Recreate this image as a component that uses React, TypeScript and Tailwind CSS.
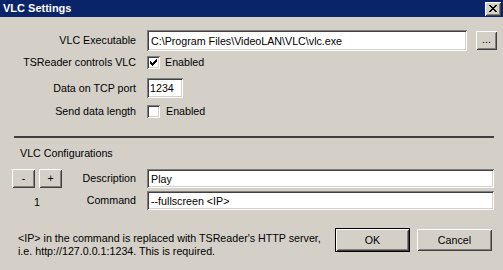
import React from 'react';

const sunken =
  'bg-white shadow-[inset_1px_1px_0_#808080,inset_-1px_-1px_0_#ffffff,inset_2px_2px_0_#404040,inset_-2px_-2px_0_#d4d0c8]';
const raised =
  'bg-[#d4d0c8] shadow-[inset_1px_1px_0_#ffffff,inset_-1px_-1px_0_#404040,inset_2px_2px_0_#d4d0c8,inset_-2px_-2px_0_#808080]';

function TextBox({ value, className }: { value: string; className: string }) {
  return (
    <div className={`${sunken} ${className} flex items-center pl-[4px] pt-[1px] overflow-hidden whitespace-nowrap`}>
      {value}
    </div>
  );
}

function CheckBox({ checked }: { checked: boolean }) {
  return (
    <div className={`${sunken} w-[13px] h-[13px] shrink-0 relative`}>
      {checked && (
        <svg width="7" height="7" viewBox="0 0 7 7" className="absolute left-[3px] top-[3px]" shapeRendering="crispEdges">
          <path d="M0 2h1v1h1v1h1v-1h1v-1h1v-1h1v-1h1v3h-1v1h-1v1h-1v1h-1v1h-1v-1h-1v-1h-1z" fill="#000" />
        </svg>
      )}
    </div>
  );
}

function Button({ label, className }: { label: string; className: string }) {
  return <div className={`${raised} ${className} flex items-center justify-center`}>{label}</div>;
}

export default function App() {
  return (
    <div className="w-[503px] h-[270px] bg-[#d4d0c8] text-black text-[10.7px] leading-[13px] font-['Liberation_Sans',Arial,sans-serif] overflow-hidden">
      {/* Title bar */}
      <div className="h-[17px] bg-[#0a246a] flex items-center pl-[3px] pr-[2px]">
        <span className="text-white font-bold text-[11px]">VLC Settings</span>
        <div className={`${raised} ml-auto w-[16px] h-[14px] flex items-center justify-center`}>
          <svg width="8" height="7" viewBox="0 0 8 7" shapeRendering="crispEdges">
            <path
              d="M0 0h2v1h1v1h2v-1h1v-1h2v1h-1v1h-1v1h-1v1h1v1h1v1h1v1h-2v-1h-1v-1h-2v1h-1v1h-2v-1h1v-1h1v-1h1v-1h-1v-1h-1v-1h-1z"
              fill="#000"
            />
          </svg>
        </div>
      </div>

      {/* VLC Executable */}
      <div className="mt-[13px] h-[21px] flex items-center">
        <div className="w-[136px] text-right">VLC Executable</div>
        <TextBox value="C:\Program Files\VideoLAN\VLC\vlc.exe" className="ml-[11px] w-[320px] h-[21px]" />
        <Button label="..." className="ml-[9px] w-[21px] h-[19px] pb-[3px]" />
      </div>

      {/* TSReader controls VLC */}
      <div className="mt-[1px] h-[21px] flex items-center">
        <div className="w-[136px] text-right">TSReader controls VLC</div>
        <div className="ml-[11px] flex items-center gap-[5px]">
          <CheckBox checked />
          <span>Enabled</span>
        </div>
      </div>

      {/* Data on TCP port */}
      <div className="mt-[5px] h-[20px] flex items-center">
        <div className="w-[136px] text-right">Data on TCP port</div>
        <TextBox value="1234" className="ml-[11px] w-[36px] h-[20px] !pl-[3px]" />
      </div>

      {/* Send data length */}
      <div className="mt-[3px] h-[21px] flex items-center">
        <div className="w-[136px] text-right">Send data length</div>
        <div className="ml-[11px] flex items-center gap-[6px]">
          <CheckBox checked={false} />
          <span>Enabled</span>
        </div>
      </div>

      {/* Separator */}
      <div className="mt-[14px] ml-[14px] w-[480px] h-[2px] bg-[#404040]" />

      <div className="mt-[9px] pl-[20px] h-[13px]">VLC Configurations</div>

      {/* Configurations grid */}
      <div className="mt-[9px] pl-[12px] grid grid-cols-[50px_63px_347px] grid-rows-[19px_19px] gap-x-[11px] gap-y-[3px] items-center">
        <div className="flex gap-[4px]">
          <Button label="-" className="w-[23px] h-[19px]" />
          <Button label="+" className="w-[23px] h-[19px]" />
        </div>
        <div className="text-right">Description</div>
        <TextBox value="Play" className="h-[19px]" />
        <div className="text-center pt-[3px]">1</div>
        <div className="text-right">Command</div>
        <TextBox value="--fullscreen <IP>" className="h-[19px]" />
      </div>

      {/* Footer */}
      <div className="mt-[18px] pl-[18px] flex items-start">
        <div className="w-[317px] pt-[4px]">
          <div>&lt;IP&gt; in the command is replaced with TSReader's HTTP server,</div>
          <div>i.e. http://127.0.0.1:1234. This is required.</div>
        </div>
        <div className="border border-black">
          <Button label="OK" className="w-[73px] h-[22px]" />
        </div>
        <Button label="Cancel" className="ml-[7px] mt-[1px] w-[75px] h-[22px]" />
      </div>
    </div>
  );
}
